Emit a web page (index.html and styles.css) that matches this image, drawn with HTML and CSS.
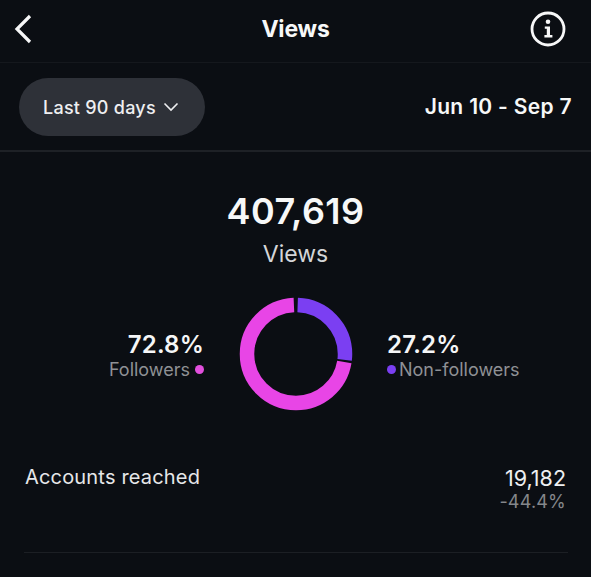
FILE: index.html
```html
<!DOCTYPE html>
<html lang="en">
<head>
<meta charset="utf-8">
<title>Views</title>
<link rel="stylesheet" href="styles.css">
</head>
<body>
<main class="screen">
  <header class="topbar">
    <svg class="back" width="20" height="32" viewBox="0 0 20 32"><path d="M17 3 L4 16 L17 29"/></svg>
    <h1 class="title">Views</h1>
    <svg class="info" width="36" height="36" viewBox="0 0 36 36">
      <circle class="info-ring" cx="18" cy="18" r="16"/>
      <circle class="info-dot" cx="18" cy="10.8" r="2.3"/>
      <path class="info-stem" d="M14.8 15.4h5.2v8.6h2.4v2.4h-8v-2.4h2.4v-6.2h-2z"/>
    </svg>
  </header>
  <section class="filter">
    <button class="pill">Last 90 days
      <svg width="16" height="10" viewBox="0 0 16 10"><path d="M1.5 1.5 L8 8 L14.5 1.5"/></svg>
    </button>
    <div class="range">Jun 10 - Sep 7</div>
  </section>
  <section class="total">
    <div class="total-num">407,619</div>
    <div class="total-label">Views</div>
  </section>
  <section class="split">
    <div class="legend legend-left">
      <div class="pct">72.8%</div>
      <div class="legend-label">Followers<span class="dot dot-pink"></span></div>
    </div>
    <svg class="donut" width="114" height="114" viewBox="0 0 114 114">
      <circle class="arc arc-purple" cx="57" cy="57" r="49" pathLength="360"/>
      <circle class="arc arc-pink" cx="57" cy="57" r="49" pathLength="360"/>
    </svg>
    <div class="legend legend-right">
      <div class="pct">27.2%</div>
      <div class="legend-label"><span class="dot dot-purple"></span>Non-followers</div>
    </div>
  </section>
  <section class="metric">
    <div class="metric-name">Accounts reached</div>
    <div class="metric-values">
      <div class="metric-num">19,182</div>
      <div class="metric-delta">-44.4%</div>
    </div>
  </section>
  <hr class="rule">
</main>
</body>
</html>
```

FILE: styles.css
```css
* { box-sizing: border-box; }
html, body { margin: 0; padding: 0; background: #0b0e13; }
body { width: 591px; height: 577px; overflow: hidden; font-family: Inter, "Liberation Sans", sans-serif; color: #f5f6f7; }
.screen { display: flex; flex-direction: column; height: 577px; }

.topbar { height: 63px; flex: none; display: grid; grid-template-columns: 1fr auto 1fr; align-items: center; padding: 0 25px 4px 13px; border-bottom: 1px solid #15181d; }
.back { fill: none; stroke: #f7f7f8; stroke-width: 3.2; }
.title { margin: 0 0 0 12px; font-size: 23px; font-weight: 700; letter-spacing: -0.2px; color: #f7f8f8; }
.info { justify-self: end; }
.info-ring { fill: none; stroke: #f7f7f8; stroke-width: 2.8; }
.info-dot, .info-stem { fill: #f7f7f8; }

.filter { height: 89px; flex: none; display: flex; align-items: center; justify-content: space-between; padding: 0 19px 0 19px; border-bottom: 2px solid #1e2126; }
.pill { width: 186px; height: 58px; display: flex; align-items: center; gap: 7px; padding: 2px 0 0 24px; border: 0; border-radius: 29px; background: #2e3138; color: #eeeff1; font: 500 18px Inter, "Liberation Sans", sans-serif; letter-spacing: 0.25px; }
.pill svg { fill: none; stroke: #eeeff1; stroke-width: 1.6; margin-top: -2px; }
.range { font-size: 21px; font-weight: 600; color: #f7f8f8; letter-spacing: 0.32px; }

.total { flex: none; display: flex; flex-direction: column; align-items: center; padding-top: 35px; }
.total-num { font-size: 36px; line-height: 48px; font-weight: 600; color: #f7f8f8; letter-spacing: 0.4px; }
.total-label { font-size: 23px; line-height: 32px; margin-top: 3px; color: #d4d5d8; }

.split { flex: none; display: grid; grid-template-columns: 204px 114px 1fr; column-gap: 35px; align-items: center; margin: 27px 0 0 0; }
.donut { display: block; grid-column: 2; }
.arc { fill: none; stroke-width: 14.5; transform: rotate(-90deg); transform-origin: 57px 57px; }
.arc-purple { stroke: #7b3ff2; stroke-dasharray: 95 265; stroke-dashoffset: -2; }
.arc-pink { stroke: #e845e6; stroke-dasharray: 258 102; stroke-dashoffset: -99.5; }
.legend { display: flex; flex-direction: column; margin-top: 4px; }
.legend-left { align-items: flex-end; grid-column: 1; }
.legend-right { align-items: flex-start; grid-column: 3; margin-left: -1px; }
.pct { font-size: 24px; line-height: 27px; font-weight: 600; color: #f5f6f7; letter-spacing: 0.2px; }
.legend-label { display: flex; align-items: center; font-size: 18px; line-height: 24px; color: #8f9195; }
.dot { width: 9px; height: 9px; border-radius: 50%; }
.dot-pink { background: #e24fdd; margin-left: 5px; }
.dot-purple { background: #7b3ff2; margin-right: 3px; }

.metric { flex: none; display: flex; justify-content: space-between; align-items: flex-start; padding: 51px 25px 0; }
.metric-name { font-size: 20px; line-height: 30px; color: #e6e7e9; letter-spacing: 0.18px; }
.metric-values { display: flex; flex-direction: column; align-items: flex-end; }
.metric-num { font-size: 21.5px; line-height: 28px; color: #eeeff1; margin-top: 2px; }
.metric-delta { font-size: 18px; line-height: 22px; color: #85878b; letter-spacing: 0.2px; margin-top: -1px; }

.rule { width: 544px; height: 1px; flex: none; border: 0; margin: 39px 0 0 24px; background: #1c1f24; }
```
